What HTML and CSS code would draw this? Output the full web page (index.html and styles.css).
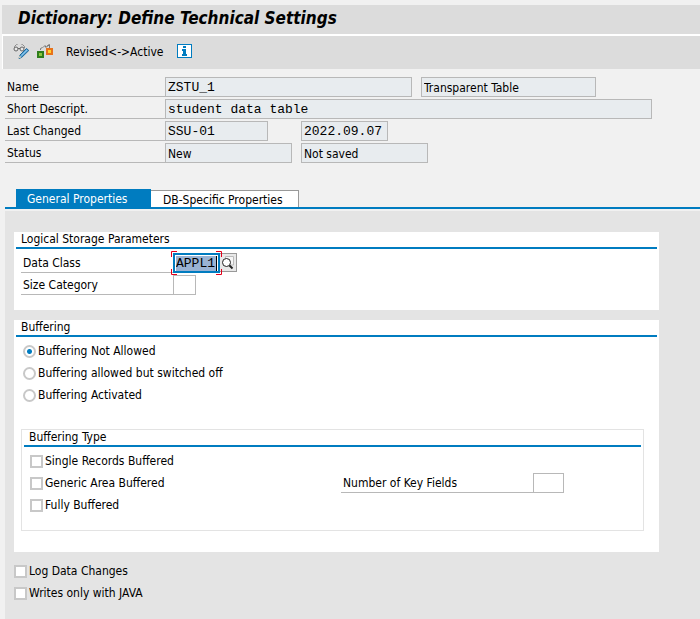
FILE: index.html
```html
<!DOCTYPE html>
<html lang="en">
<head>
<meta charset="utf-8">
<title>Dictionary: Define Technical Settings</title>
<link rel="stylesheet" href="styles.css">
</head>
<body>
<header class="titlebar"><h1>Dictionary: Define Technical Settings</h1></header>
<nav class="toolbar" aria-label="Application toolbar">
  <button class="tool" type="button" aria-label="Display/Change">
    <svg width="17" height="17" viewBox="0 0 17 17" fill="none">
      <path d="M1.500 5V3.500L3.500 1.500H4.500M11.500 5V3.500L9.500 1.500H8.500" stroke="#888"/>
      <circle cx="3" cy="6" r="2" stroke="#666" fill="#e8e8e8"/>
      <circle cx="9" cy="6" r="2" stroke="#666" fill="#e8e8e8"/>
      <path d="M5 5.500h2" stroke="#666"/>
      <path d="M6 15.500l1-3.500 6.500-6.500 2.300 2-7 6.800z" fill="#5aa5d6" stroke="#1d6798"/>
      <path d="M8.500 12.500l5.500-5.500" stroke="#8cc4e8"/>
      <path d="M5.500 15.500l1.200-3 1.600 1.800z" fill="#e8d9c0"/>
    </svg>
  </button>
  <button class="tool" type="button" aria-label="Other Object">
    <svg width="17" height="17" viewBox="0 0 17 17" fill="none">
      <path d="M3.500 7V5.500L5.500 4.500M12.500 5V1.500L10.500 3.500M6 4.500L8 2.500L9 4.500L11.500 1.500" stroke="#777"/>
      <rect x="1" y="9" width="5" height="5" fill="#8cc63f" stroke="#2f7d1b" stroke-width="2"/>
      <rect x="10" y="6" width="5" height="5" fill="#ffd42a" stroke="#e8731a" stroke-width="2"/>
    </svg>
  </button>
  <button class="tool tool-text" type="button">Revised&lt;-&gt;Active</button>
  <button class="tool" type="button" aria-label="Information">
    <svg width="15" height="15" viewBox="0 0 15 15">
      <rect x=".5" y=".5" width="14" height="13" fill="#fff" stroke="#007cc0"/>
      <path d="M6 2h3v2H6zM5 5h4v5h1v2H5v-2h1V7H5z" fill="#007cc0"/>
    </svg>
  </button>
</nav>
<form>
  <section class="header-data" aria-label="Table">
    <div class="row">
      <label class="label" for="name">Name</label>
      <input class="field mono w-name" id="name" value="ZSTU_1" readonly>
      <input class="field w-kind next" aria-label="Category" value="Transparent Table" readonly>
    </div>
    <div class="row">
      <label class="label" for="descr">Short Descript.</label>
      <input class="field mono w-descr" id="descr" value="student data table" readonly>
    </div>
    <div class="row">
      <label class="label" for="changed">Last Changed</label>
      <span class="user"><input class="field mono w-user" id="changed" value="SSU-01" readonly></span>
      <input class="field mono w-date next" aria-label="Date" value="2022.09.07" readonly>
    </div>
    <div class="row">
      <label class="label" for="status">Status</label>
      <input class="field w-status" id="status" value="New" readonly>
      <input class="field w-status next" aria-label="Save state" value="Not saved" readonly>
    </div>
  </section>

  <div class="tabs" role="tablist">
    <button class="tab active" type="button" role="tab" aria-selected="true">General Properties</button>
    <button class="tab" type="button" role="tab" aria-selected="false">DB-Specific Properties</button>
  </div>

  <main class="panel" role="tabpanel">
    <section class="group">
      <h2>Logical Storage Parameters</h2>
      <div class="group-body storage">
        <div class="row">
          <label class="label" for="dataclass">Data Class</label>
          <span class="focus">
            <input class="field mono selected" id="dataclass" value="APPL1">
            <i class="caret"></i>
            <svg class="corners" width="51" height="24" viewBox="0 0 51 24" fill="none" stroke="#e2001a">
              <path d="M6 .5H.5V6M45 .5h5.500V6M.5 18v5.500H6M45 23.500h5.500V18"/>
            </svg>
          </span>
          <button class="help" type="button" aria-label="Search help">
            <svg width="15" height="17" viewBox="0 0 15 17" fill="none">
              <path d="M5.500 5V2.500h8V11H11" stroke="#bbb" fill="#f6f6f6"/>
              <circle cx="6.500" cy="8.500" r="4" stroke="#222" fill="#fff"/>
              <path d="M9.500 11.500l3 3" stroke="#222" stroke-width="2"/>
            </svg>
          </button>
        </div>
        <div class="row">
          <label class="label" for="size">Size Category</label>
          <input class="field mono edit w-size" id="size">
        </div>
      </div>
    </section>

    <section class="group buffering">
      <h2>Buffering</h2>
      <div class="group-body choices">
        <label class="choice"><input type="radio" name="buffering" checked>Buffering Not Allowed</label>
        <label class="choice"><input type="radio" name="buffering">Buffering allowed but switched off</label>
        <label class="choice"><input type="radio" name="buffering">Buffering Activated</label>
      </div>
      <section class="subgroup">
        <h3>Buffering Type</h3>
        <div class="types">
          <label class="choice"><input type="checkbox">Single Records Buffered</label>
          <label class="choice"><input type="checkbox">Generic Area Buffered</label>
          <div class="row keys">
            <label class="label" for="keys">Number of Key Fields</label>
            <input class="field mono edit w-keys" id="keys">
          </div>
          <label class="choice"><input type="checkbox">Fully Buffered</label>
        </div>
      </section>
    </section>

    <div class="options">
      <label class="choice"><input type="checkbox">Log Data Changes</label>
      <label class="choice"><input type="checkbox">Writes only with JAVA</label>
    </div>
  </main>
</form>
</body>
</html>
```

FILE: styles.css
```css
* { box-sizing: border-box; }

body {
  margin: 0;
  padding-top: 5px;
  min-height: 100vh;
  display: flex;
  flex-direction: column;
  background: #f1f1f1;
  color: #000;
  font: 12px/20px "DejaVu Sans Condensed", "Noto Sans", sans-serif;
}

h1, h2, h3 { margin: 0; font-weight: normal; }
h2, h3 { font-size: 12px; }
button, input { font: inherit; color: inherit; margin: 0; border-radius: 0; }

.titlebar {
  margin-left: 2px;
  padding: 3px 16px 6px;
  background: #dcdcdc;
  border-bottom: 2px solid #fff;
}
.titlebar h1 { font-size: 17px; line-height: 20px; font-weight: bold; font-style: italic; }

.toolbar {
  display: flex;
  align-items: center;
  margin-left: 2px;
  padding: 0 10px 2px;
  height: 33px;
  background: #dcdcdc;
  border-left: 1px solid #fff;
}
.tool { display: flex; padding: 0; margin-right: 7px; border: 0; background: none; }
.tool-text { margin: 0 14px 0 5px; }

form { display: flex; flex-direction: column; flex: 1; }

.header-data {
  display: grid;
  gap: 2px;
  padding: 8px 5px 26px;
}

.row { display: flex; height: 20px; }
.label {
  width: 160px;
  padding-left: 2px;
  border-bottom: 1px solid #b8b8b8;
  line-height: 21px;
  white-space: nowrap;
}
.field {
  height: 20px;
  padding: 1px 2px 0;
  border: 1px solid #b8b8b8;
  background: #e8ecef;
  outline: 0;
}
.mono { font: 13px/17px "Liberation Mono", monospace; }
.edit { background: #fff; }
.next { margin-left: 9px; }
.w-name { width: 247px; }
.w-kind { width: 175px; }
.w-descr { width: 487px; }
.user { display: flex; width: 127px; }
.w-user { width: 103px; }
.w-date { width: 87px; }
.w-status { width: 127px; }
.w-size { width: 23px; }
.w-keys { width: 31px; }

.tabs {
  display: flex;
  align-items: flex-end;
  margin-left: 5px;
  padding-left: 11px;
  border-bottom: 2px solid #007cc0;
}
.tab {
  height: 17px;
  width: 148px;
  padding: 1px 0 0 12px;
  border: 1px solid #999;
  border-width: 1px 1px 0 0;
  background: #fff;
  line-height: 16px;
  text-align: left;
  white-space: nowrap;
}
.tab.active {
  width: 135px;
  height: 18px;
  padding: 2px 0 0 11px;
  border: 0;
  background: #007cc0;
  color: #fff;
}

.panel {
  flex: 1;
  margin: 2px 0 0 5px;
  padding: 21px 41px 14px 9px;
  background: #e4e4e4;
}
.group {
  margin-bottom: 10px;
  padding: 0 2px;
  background: #fff;
}
.group h2, .subgroup h3 {
  padding-left: 5px;
  line-height: 15px;
  border-bottom: 2px solid #007cc0;
}
.group-body { padding: 4px 5px 15px; }
.group-body .label { width: 152px; }
.storage { display: grid; gap: 2px; }

.focus { position: relative; width: 47px; }
.selected {
  width: 47px;
  padding: 1px 1px 0;
  border: 2px solid #007cc0;
  background: #fff linear-gradient(#9ab3d3, #9ab3d3) content-box;
  line-height: 15px;
}
.corners { position: absolute; left: -2px; top: -2px; }
.caret { position: absolute; right: 3px; top: 3px; width: 1px; height: 15px; background: #000; }
.help {
  display: flex;
  width: 17px;
  height: 19px;
  padding: 0;
  border: 1px solid #999;
  border-left: 0;
  background: #e8e8e8;
}

.group-body.choices { padding: 3px 7px 23px; }
.choice { display: flex; align-items: center; gap: 2px; height: 22px; white-space: nowrap; }
.choice input {
  appearance: none;
  width: 13px;
  height: 13px;
  border: 2px solid #c8c8c8;
  background: #fff;
}
.choice input[type="radio"] { border-radius: 50%; }
.choice input[type="radio"]:checked {
  background: radial-gradient(circle, #007cc0 2px, #fff 3px);
}

.buffering { margin-bottom: 8px; padding-bottom: 21px; }
.subgroup {
  margin: 0 13px 0 5px;
  padding: 0 2px;
  border: 1px solid #e3e3e3;
}
.types {
  display: grid;
  grid-template-columns: 311px 1fr;
  padding: 3px 0 14px 6px;
}
.types .choice { grid-column: 1; }
.types .keys { grid-column: 2; align-self: center; }
.keys .label { width: 192px; }
```
